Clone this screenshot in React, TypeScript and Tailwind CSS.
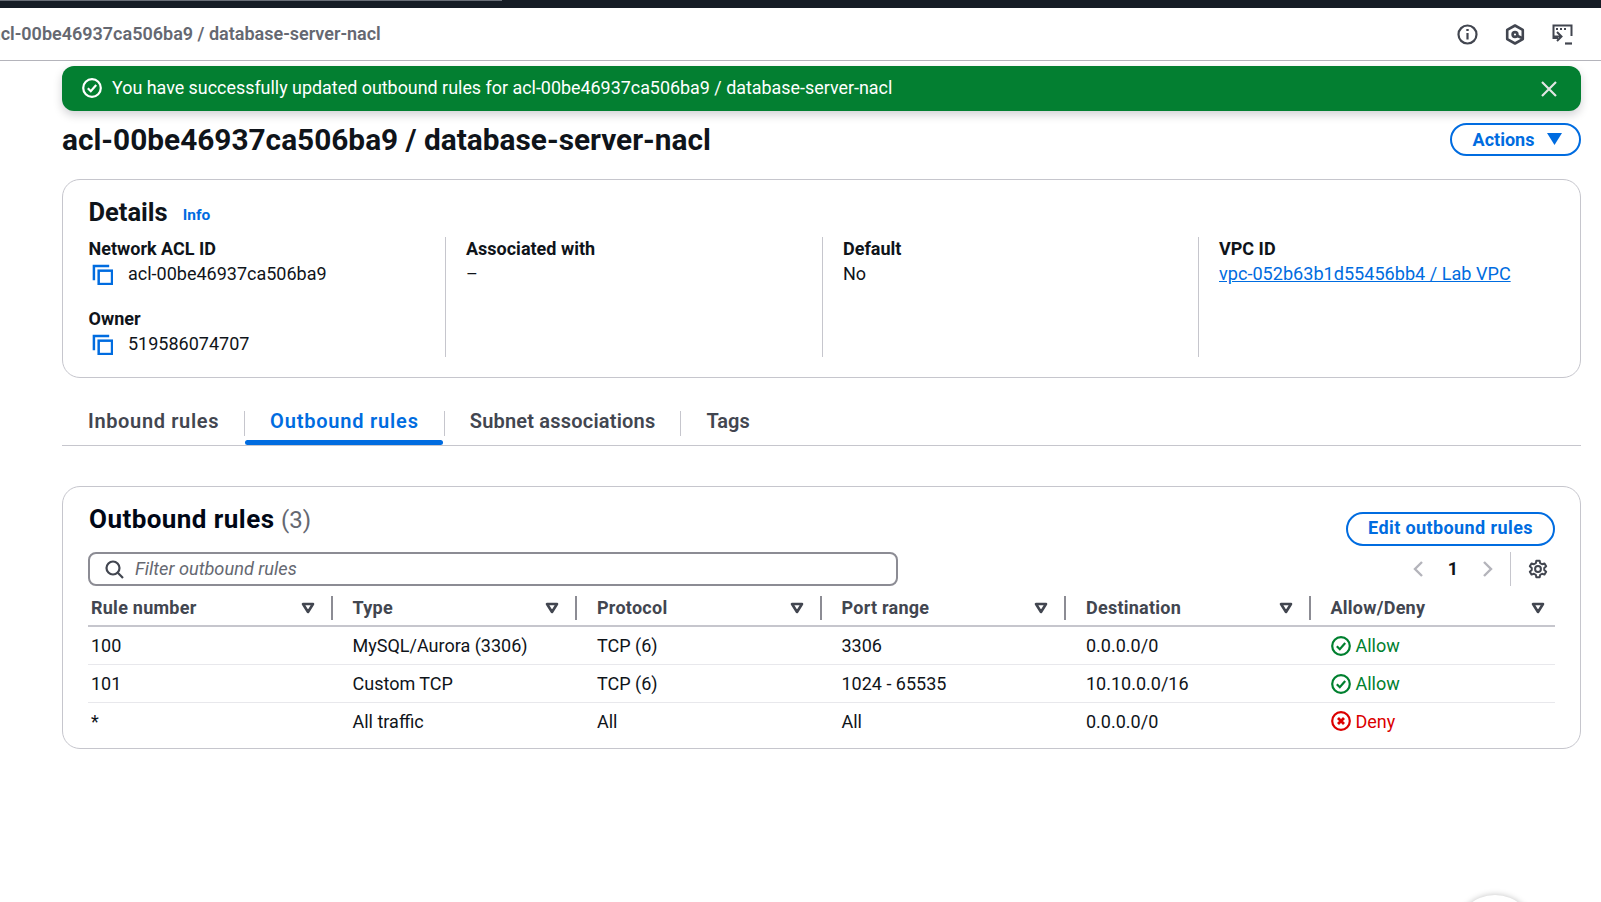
const FONT = "font-['Roboto',sans-serif]";

const rows = [
  { num: "100", type: "MySQL/Aurora (3306)", proto: "TCP (6)", port: "3306", dest: "0.0.0.0/0", allow: true },
  { num: "101", type: "Custom TCP", proto: "TCP (6)", port: "1024 - 65535", dest: "10.10.0.0/16", allow: true },
  { num: "*", type: "All traffic", proto: "All", port: "All", dest: "0.0.0.0/0", allow: false },
];

const columns = ["Rule number", "Type", "Protocol", "Port range", "Destination", "Allow/Deny"];

const tabs = [
  { label: "Inbound rules", tracking: "tracking-[0.65px]" },
  { label: "Outbound rules", tracking: "tracking-[0.8px]" },
  { label: "Subnet associations", tracking: "tracking-[0.2px]" },
  { label: "Tags", tracking: "tracking-normal" },
];

function CopyIcon() {
  return (
    <svg width="21" height="21" viewBox="0 0 22 22" fill="none" stroke="#006ce0" strokeWidth="2.6" className="shrink-0">
      <path d="M2 17V2h16" />
      <rect x="7" y="7" width="14" height="14" />
    </svg>
  );
}

function SortIcon() {
  return (
    <svg width="14" height="12" viewBox="0 0 14 12" fill="none" stroke="#424650" strokeWidth="2.6" strokeLinejoin="round" className="shrink-0">
      <path d="M2 2h10L7 10z" />
    </svg>
  );
}

function CheckCircle({ color }: { color: string }) {
  return (
    <svg width="20" height="20" viewBox="0 0 20 20" fill="none" stroke={color} strokeWidth="2.2" className="shrink-0">
      <circle cx="10" cy="10" r="8.800" />
      <path d="M5.800 10.200l3 3 5.400-6.200" />
    </svg>
  );
}

function XCircle() {
  return (
    <svg width="20" height="20" viewBox="0 0 20 20" fill="none" stroke="#db0000" strokeWidth="2.2" className="shrink-0">
      <circle cx="10" cy="10" r="8.800" />
      <path d="M7 7l6 6M13 7l-6 6" strokeWidth="2.800" />
    </svg>
  );
}

function HeaderIcons() {
  return (
    <div className="flex items-center gap-[27px] pr-[28px]">
      <svg width="21" height="21" viewBox="0 0 21 21" fill="none" stroke="#424650" strokeWidth="2.2">
        <circle cx="10.500" cy="10.500" r="9" />
        <path d="M10.500 9v6.500" />
        <path d="M10.500 5v2" strokeWidth="2.400" />
      </svg>
      <svg width="20" height="21" viewBox="0 0 20 21" fill="none" stroke="#424650" strokeWidth="2.600">
        <path d="M10 1.500l7.800 4.400v9.200L10 19.500l-7.800-4.400V5.900z" strokeLinejoin="round" />
        <circle cx="10" cy="10.500" r="2.400" />
        <path d="M11.500 11.500l5.500 2.500" />
      </svg>
      <svg width="21" height="21" viewBox="0 0 21 21" fill="none" stroke="#424650" strokeWidth="2">
        <path d="M6 14H1.500V1.500h18V12" />
        <path d="M4 5h2M8 5h2M12 5h2" strokeWidth="2" />
        <path d="M5 8l4.500 4.500L5 17M1 12.500h8" />
        <path d="M13 19.500h7" strokeWidth="2.200" />
      </svg>
    </div>
  );
}

function Detail({ label, children }: { label: string; children: React.ReactNode }) {
  return (
    <div>
      <div className="text-[18px] leading-[24px] font-bold text-[#0f141a]">{label}</div>
      <div className="text-[18px] leading-[26px] text-[#0f141a]">{children}</div>
    </div>
  );
}

function CopyValue({ value }: { value: string }) {
  return (
    <div className="flex items-center gap-[15px] pl-[3.500px]">
      <CopyIcon />
      <span>{value}</span>
    </div>
  );
}

function Banner() {
  return (
    <div className="flex h-[45px] items-center justify-between rounded-[12px] bg-[#037f31] pl-[20px] pr-[23px] text-white shadow-[0_4px_10px_rgba(0,7,22,0.18)]">
      <div className="flex items-center gap-[10px] text-[17.900px]">
        <CheckCircle color="#ffffff" />
        <span>You have successfully updated outbound rules for acl-00be46937ca506ba9 / database-server-nacl</span>
      </div>
      <svg width="18" height="18" viewBox="0 0 18 18" fill="none" stroke="#e2e6e4" strokeWidth="2.200">
        <path d="M2 2l14 14M16 2L2 16" />
      </svg>
    </div>
  );
}

function DetailsCard() {
  return (
    <section className="mt-[23px] h-[199px] rounded-[18px] border border-[#c6c6cd] pl-[25.500px] pt-[16px]">
      <div className="flex items-baseline gap-[15px]">
        <h2 className="text-[25.500px] leading-[32px] font-bold text-[#0f141a]">Details</h2>
        <a className="-translate-y-px text-[15.500px] font-bold text-[#006ce0]">Info</a>
      </div>
      <div className="mt-[9px] grid h-[120px] grid-cols-[356.500px_377px_376px_1fr]">
        <div className="flex flex-col gap-[20px]">
          <Detail label="Network ACL ID"><CopyValue value="acl-00be46937ca506ba9" /></Detail>
          <Detail label="Owner"><CopyValue value="519586074707" /></Detail>
        </div>
        <div className="border-l border-[#c6c6cd] pl-[20px]">
          <Detail label="Associated with">–</Detail>
        </div>
        <div className="border-l border-[#c6c6cd] pl-[20px]">
          <Detail label="Default">No</Detail>
        </div>
        <div className="border-l border-[#c6c6cd] pl-[20px]">
          <Detail label="VPC ID"><a className="text-[18.100px] text-[#006ce0] underline">vpc-052b63b1d55456bb4 / Lab VPC</a></Detail>
        </div>
      </div>
    </section>
  );
}

function Tabs() {
  return (
    <div className="mt-[23px] flex h-[45px] border-b border-[#c6c6cd] pl-[1px]">
      {tabs.map((tab, i) => (
        <div key={tab.label} className="relative flex h-[44px] items-center">
          {i > 0 && <span className="h-[25px] w-px bg-[#c6c6cd]" />}
          <span className={`px-[25px] pb-[5px] text-[20px] font-semibold ${tab.tracking} ${tab.label === "Outbound rules" ? "text-[#006ce0]" : "text-[#424650]"}`}>
            {tab.label}
          </span>
          {tab.label === "Outbound rules" && (
            <span className="absolute bottom-0 left-[1px] right-[1px] h-[5px] rounded-full bg-[#006ce0]" />
          )}
        </div>
      ))}
    </div>
  );
}

function RulesCard() {
  return (
    <section className="mt-[40px] h-[263px] rounded-[18px] border border-[#c6c6cd] pl-[25px] pr-[25px] pt-[15px]">
      <div className="flex items-start justify-between">
        <div className="w-[810px]">
          <h2 className="pl-[1px] text-[26px] leading-[34px] font-bold text-[#000716]">
            <span className="tracking-[0.45px]">Outbound rules</span> <span className="text-[24px] font-normal text-[#656871]">(3)</span>
          </h2>
          <div className="mt-[15px] flex h-[34px] items-center gap-[11px] rounded-[8px] border-2 border-[#8c8c94] pl-[15px]">
            <svg width="19" height="19" viewBox="0 0 19 19" fill="none" stroke="#424650" strokeWidth="2.200">
              <circle cx="8" cy="8" r="6.500" />
              <path d="M12.800 12.800L18 18" />
            </svg>
            <span className="text-[18.200px] italic text-[#656871]">Filter outbound rules</span>
          </div>
        </div>
        <div className="flex flex-col items-end">
          <button className="mt-[10px] h-[34px] w-[209px] rounded-full border-2 border-[#006ce0] pb-[3px] text-[18px] font-bold tracking-[0.4px] text-[#006ce0]">
            Edit outbound rules
          </button>
          <div className="mt-[5px] flex h-[35px] items-center">
            <svg width="12" height="18" viewBox="0 0 12 18" fill="none" stroke="#b4b4bb" strokeWidth="2.400"><path d="M10 2L3 9l7 7" /></svg>
            <span className="w-[58px] text-center text-[18px] font-bold text-[#0f141a]">1</span>
            <svg width="12" height="18" viewBox="0 0 12 18" fill="none" stroke="#b4b4bb" strokeWidth="2.400"><path d="M2 2l7 7-7 7" /></svg>
            <span className="ml-[16px] h-[34px] w-px bg-[#c6c6cd]" />
            <svg width="20" height="20" viewBox="0 0 24 24" fill="none" stroke="#424650" strokeWidth="2.400" className="ml-[17px] mr-[7px]">
              <circle cx="12" cy="12" r="3.500" />
              <path d="M10 2h4l.6 3 2.300 1.300 2.900-1 2 3.500-2.300 2v2.400l2.300 2-2 3.500-2.900-1-2.300 1.300-.6 3h-4l-.6-3-2.300-1.300-2.900 1-2-3.500 2.300-2v-2.400l-2.300-2 2-3.500 2.900 1L9.400 5z" strokeLinejoin="round" />
            </svg>
          </div>
        </div>
      </div>

      <div className="grid h-[41px] grid-cols-[244.500px_244.500px_244.500px_244.500px_244.500px_1fr] items-center border-b-2 border-[#c6c6cd] pt-[4px] text-[18px] font-bold tracking-[0.25px] text-[#424650]">
        {columns.map((col, i) => (
          <div
            key={col}
            className={`flex h-[24px] items-center justify-between ${i === 0 ? "pl-[3px]" : "pl-[20px]"} ${i < 5 ? "border-r-2 border-[#8c8c94] pr-[16px]" : "pr-[10px]"}`}
          >
            <span>{col}</span>
            <SortIcon />
          </div>
        ))}
      </div>

      {rows.map((row, i) => (
        <div
          key={row.num}
          className={`grid h-[38px] grid-cols-[244.500px_244.500px_244.500px_244.500px_244.500px_1fr] items-center text-[18px] text-[#0f141a] ${i < 2 ? "border-b border-[#e8e8ec]" : "pb-[2px]"}`}
        >
          <div className="pl-[3px]">{row.num}</div>
          <div className="pl-[20px]">{row.type}</div>
          <div className="pl-[20px]">{row.proto}</div>
          <div className="pl-[20px]">{row.port}</div>
          <div className="pl-[20px]">{row.dest}</div>
          <div className={`flex items-center gap-[5px] pl-[20px] ${row.allow ? "text-[#00802f]" : "text-[#db0000]"}`}>
            {row.allow ? <CheckCircle color="#00802f" /> : <XCircle />}
            <span>{row.allow ? "Allow" : "Deny"}</span>
          </div>
        </div>
      ))}
    </section>
  );
}

export default function App() {
  return (
    <div className={`relative h-[902px] w-full overflow-hidden bg-white ${FONT}`}>
      <div className="h-[8px] bg-[#161d26]">
        <div className="h-px w-[502px] bg-[#6a6f78]" />
      </div>
      <header className="flex h-[53px] items-center justify-between border-b border-[#b4b4bb]">
        <span className="-ml-[9px] pb-[1px] text-[18px] font-semibold text-[#656871]">acl-00be46937ca506ba9 / database-server-nacl</span>
        <HeaderIcons />
      </header>
      <main className="pl-[62px] pr-[20px] pt-[5px]">
        <Banner />
        <div className="mt-[12px] flex h-[33px] items-center justify-between">
          <h1 className="pt-[2px] text-[29.800px] font-bold text-[#0f141a]">acl-00be46937ca506ba9 / database-server-nacl</h1>
          <button className="flex h-[33px] w-[131px] items-center justify-center gap-[13px] rounded-full border-2 border-[#006ce0] pb-[1px] pl-[4px] text-[18px] font-bold text-[#006ce0]">
            Actions
            <svg width="15" height="12" viewBox="0 0 15 12" fill="#006ce0"><path d="M0 0h15L7.500 12z" /></svg>
          </button>
        </div>
        <DetailsCard />
        <Tabs />
        <RulesCard />
      </main>
      <div className="absolute left-[1455px] top-[895px] h-[80px] w-[80px] rounded-full bg-white shadow-[0_0_6px_rgba(0,0,0,0.25)]" />
    </div>
  );
}
